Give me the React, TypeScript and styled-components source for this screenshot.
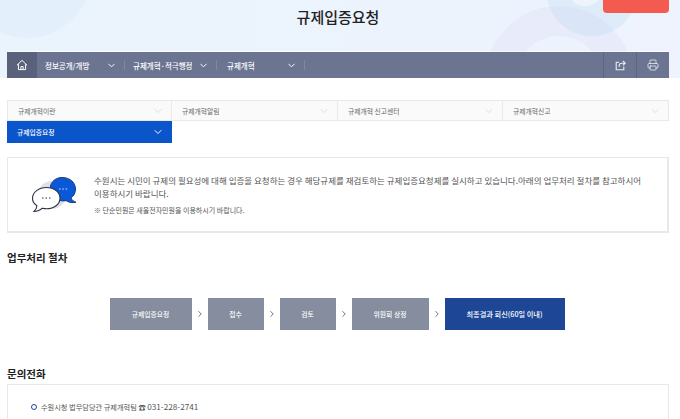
import styled, { createGlobalStyle } from "styled-components";
import { ChevronDown, ChevronRight, Printer } from "lucide-react";

const navItems = [
  { label: "정보공개/개방", width: 88, pad: 8 },
  { label: "규제개혁·적극행정", width: 92, pad: 8 },
  { label: "규제개혁", width: 88, pad: 10 },
];

const tabs = ["규제개혁이란", "규제개혁알림", "규제개혁 신고센터", "규제개혁신고"];

const steps = [
  { label: "규제입증요청", width: 82 },
  { label: "접수", width: 56 },
  { label: "검토", width: 56 },
  { label: "위원회 상정", width: 77 },
  { label: "최종결과 회신(60일 이내)", width: 120, last: true },
];

const App = () => {
  return (
    <PageStyle>
      <GlobalStyle />
      <HeroStyle>
        <CircleStyle $left={-38} $top={-92} $size={130} $color="#e3f0fb" />
        <RingStyle />
        <CircleStyle $left={546} $top={-56} $size={92} $color="rgba(190, 222, 244, 0.32)" />
        <CircleStyle $left={567} $top={-30} $size={36} $color="rgba(255, 255, 255, 0.45)" />
        <RedButtonStyle />
        <TitleStyle>규제입증요청</TitleStyle>
        <NavStyle>
          <HomeButtonStyle>
            <HomeIcon />
          </HomeButtonStyle>
          {navItems.map((item) => (
            <NavItemStyle key={item.label} $width={item.width} $pad={item.pad}>
              <span>{item.label}</span>
              <ChevronDown size={11} strokeWidth={2} />
            </NavItemStyle>
          ))}
          <NavToolsStyle>
            <NavToolStyle>
              <ShareIcon />
            </NavToolStyle>
            <NavToolStyle>
              <Printer size={12} strokeWidth={1.6} />
            </NavToolStyle>
          </NavToolsStyle>
        </NavStyle>
      </HeroStyle>

      <ContentStyle>
        <TabGridStyle>
          {tabs.map((tab) => (
            <TabStyle key={tab}>
              <span>{tab}</span>
              <ChevronDown size={12} strokeWidth={1} />
            </TabStyle>
          ))}
          <ActiveTabStyle>
            <span>규제입증요청</span>
            <ChevronDown size={12} strokeWidth={2} />
          </ActiveTabStyle>
        </TabGridStyle>

        <InfoBoxStyle>
          <ChatIcon />
          <InfoTextStyle>
            <InfoLeadStyle>
              수원시는 시민이 규제의 필요성에 대해 입증을 요청하는 경우 해당규제를 재검토하는
              규제입증요청제를 실시하고 있습니다.아래의 업무처리 절차를 참고하시어 이용하시기
              바랍니다.
            </InfoLeadStyle>
            <InfoNoteStyle>※ 단순민원은 새울전자민원을 이용하시기 바랍니다.</InfoNoteStyle>
          </InfoTextStyle>
        </InfoBoxStyle>

        <SectionTitleStyle>업무처리 절차</SectionTitleStyle>

        <StepRowStyle>
          {steps.map((step, index) => (
            <StepGroupStyle key={step.label}>
              {index > 0 && <ChevronRight size={10} strokeWidth={1.8} color="#444" />}
              <StepStyle $width={step.width} $last={step.last}>
                {step.label}
              </StepStyle>
            </StepGroupStyle>
          ))}
        </StepRowStyle>

        <ContactTitleStyle>문의전화</ContactTitleStyle>
        <ContactBoxStyle>
          <ContactLineStyle>
            <BulletStyle />
            <span>
              수원시청 법무담당관 규제개혁팀 ☎ <PhoneStyle>031-228-2741</PhoneStyle>
            </span>
          </ContactLineStyle>
        </ContactBoxStyle>
      </ContentStyle>
    </PageStyle>
  );
};

export default App;

const HomeIcon = () => (
  <svg width="12" height="12" viewBox="0 0 12 12" fill="none" stroke="#fff" strokeWidth="1">
    <path d="M1 6.2 6 1.4l5 4.8M2.4 5.2v5.4h7.2V5.2" />
    <path d="M4.9 10.6V7.6h2.2v3" />
  </svg>
);

const ShareIcon = () => (
  <svg width="11" height="11" viewBox="0 0 11 11" fill="none" stroke="#e8ebf2" strokeWidth="1.1">
    <path d="M4 2.2H1.2v7.6h7.6V6.6" />
    <path d="M4.2 7V5.4c0-1.3 1-2.2 2.4-2.2H10M8 1 10.2 3.2 8 5.4" />
  </svg>
);

const ChatIcon = () => (
  <svg width="47" height="38" viewBox="0 0 47 38" fill="none">
    <circle cx="21" cy="19" r="14" fill="#dfe1e8" />
    <path
      d="M31 1.5c8 0 13.5 5 13.5 11.5 0 4-1.8 7-4.6 9 .9 2 2.5 3.2 5.1 4.3-3.7.7-7 .2-9.8-1.6-7.4 1.3-14.2-3-15.7-9.7C17.9 8 23 1.5 31 1.500z"
      fill="#0a58d8"
      stroke="#163f78"
      strokeWidth="1"
    />
    <path
      d="M15.5 11.5c7.7 0 13.5 4.7 13.5 10.7 0 6-5.800 10.500-13.500 10.500-1.500 0-2.900-.2-4.200-.5-1.900 2-5 3.300-8.300 3.300 1.700-1.700 2.800-3.600 2.900-5.800C3 27.800 1.500 25.200 1.500 22.200c0-6 6.300-10.700 14-10.700z"
      fill="#fff"
      stroke="#2c3440"
      strokeWidth="1.1"
    />
    <path d="M11 22h1.500M14.500 22H16M18 22h1.500" stroke="#333" strokeWidth="1.2" />
    <path d="M28 13h1.500M31.300 13h1.500M34.600 13h1.500" stroke="#dbe8ff" strokeWidth="1.2" />
  </svg>
);

const GlobalStyle = createGlobalStyle`
  html, body {
    margin: 0;
    padding: 0;
    background: #fff;
    overflow: hidden;
  }

  * {
    box-sizing: border-box;
  }
`;

const PageStyle = styled.div`
  width: 680px;
  height: 419px;
  overflow: hidden;
  font-family: "Noto Sans CJK KR", "Noto Sans", sans-serif;
  color: #333;
`;

const HeroStyle = styled.header`
  position: relative;
  height: 78px;
  padding: 0 11px 0 7px;
  display: flex;
  flex-direction: column;
  overflow: hidden;
  background: linear-gradient(90deg, #eaf4fd, #eef3fe);
`;

const CircleStyle = styled.div<{ $left: number; $top: number; $size: number; $color: string }>`
  position: absolute;
  left: ${(p) => p.$left}px;
  top: ${(p) => p.$top}px;
  width: ${(p) => p.$size}px;
  height: ${(p) => p.$size}px;
  border-radius: 50%;
  background: ${(p) => p.$color};
`;

const RingStyle = styled.div`
  position: absolute;
  left: 485px;
  top: 6px;
  width: 148px;
  height: 148px;
  border-radius: 50%;
  border: 30px solid #e7ebfa;
`;

const RedButtonStyle = styled.div`
  position: absolute;
  left: 603px;
  top: -6px;
  width: 66px;
  height: 19px;
  border-radius: 4px;
  background: #f35b50;
`;

const TitleStyle = styled.h1`
  position: relative;
  margin: 0;
  height: 52px;
  padding-top: 4px;
  text-align: center;
  font-size: 15px;
  line-height: 26px;
  font-weight: 500;
  color: #222;
`;

const NavStyle = styled.nav`
  position: relative;
  height: 26px;
  display: flex;
  background: #6b7592;
  box-shadow: 0 -1px 0 rgba(255, 255, 255, 0.7);
  color: #fff;
`;

const HomeButtonStyle = styled.div`
  width: 30px;
  display: flex;
  align-items: center;
  justify-content: center;
  background: #59627a;
`;

const NavItemStyle = styled.div<{ $width: number; $pad: number }>`
  position: relative;
  width: ${(p) => p.$width}px;
  flex: 0 0 auto;
  display: flex;
  align-items: center;
  justify-content: space-between;
  padding: 0 8px 0 ${(p) => p.$pad}px;
  font-size: 7.5px;
  font-weight: 500;

  &::after {
    content: "";
    position: absolute;
    right: 0;
    top: 8px;
    height: 10px;
    border-right: 1px solid #7f88a3;
  }
`;

const NavToolsStyle = styled.div`
  margin-left: auto;
  display: flex;
`;

const NavToolStyle = styled.div`
  width: 33px;
  display: flex;
  align-items: center;
  justify-content: center;
  border-left: 1px solid #5c6682;
  color: #e8ebf2;
`;

const ContentStyle = styled.main`
  padding: 22px 11px 0 7px;
`;

const TabGridStyle = styled.div`
  display: grid;
  grid-template-columns: 165px 166px 165px 166px;
`;

const TabStyle = styled.div`
  height: 21px;
  display: flex;
  align-items: center;
  justify-content: space-between;
  padding: 0 7px 0 10px;
  background: #fafafa;
  border-top: 1px solid #e9e9e9;
  border-bottom: 1px solid #e9e9e9;
  border-right: 1px solid #e9e9e9;
  font-size: 6.8px;
  color: #666;

  &:first-child {
    border-left: 1px solid #e9e9e9;
  }

  svg {
    color: #c4c4c4;
  }
`;

const ActiveTabStyle = styled.div`
  height: 22px;
  display: flex;
  align-items: center;
  justify-content: space-between;
  padding: 0 8px 0 10px;
  background: #0b55cb;
  font-size: 6.8px;
  font-weight: 500;
  color: #fff;
`;

const InfoBoxStyle = styled.section`
  margin-top: 14px;
  height: 76px;
  display: flex;
  align-items: center;
  gap: 16px;
  padding: 0 24px 0 23px;
  border: 1px solid #e8e8e8;
  border-width: 1px 2px 2px 1px;
`;

const InfoTextStyle = styled.div`
  flex: 1;
`;

const InfoLeadStyle = styled.p`
  margin: 0;
  font-size: 8.5px;
  line-height: 13px;
  color: #555;
`;

const InfoNoteStyle = styled.p`
  margin: 5px 0 0;
  font-size: 7px;
  line-height: 11px;
  color: #555;
`;

const SectionTitleStyle = styled.h2`
  margin: 17px 0 0;
  font-size: 10.5px;
  line-height: 16px;
  font-weight: 700;
  color: #222;
`;

const StepRowStyle = styled.div`
  margin-top: 32px;
  padding-right: 2px;
  display: flex;
  justify-content: center;
`;

const StepGroupStyle = styled.div`
  display: flex;
  align-items: center;

  svg {
    margin: 0 3px;
  }
`;

const StepStyle = styled.div<{ $width: number; $last?: boolean }>`
  width: ${(p) => p.$width}px;
  height: 32px;
  display: flex;
  align-items: center;
  justify-content: center;
  background: ${(p) => (p.$last ? "#1d4796" : "#858d9e")};
  font-size: ${(p) => (p.$last ? 7.2 : 6.8)}px;
  font-weight: 500;
  color: #fff;
`;

const ContactTitleStyle = styled.h2`
  margin: 36px 0 0;
  font-size: 10.5px;
  line-height: 16px;
  font-weight: 700;
  color: #222;
`;

const ContactBoxStyle = styled.section`
  margin-top: 2px;
  height: 60px;
  padding: 14px 22px;
  border: 1px solid #e8e8e8;
`;

const ContactLineStyle = styled.div`
  display: flex;
  align-items: center;
  gap: 4px;
  font-size: 7.2px;
  line-height: 14px;
  color: #555;
`;

const PhoneStyle = styled.span`
  font-size: 8.2px;
`;

const BulletStyle = styled.span`
  width: 6px;
  height: 6px;
  flex: 0 0 auto;
  margin-left: 1px;
  border: 1.7px solid #1d4796;
  border-radius: 50%;
`;
